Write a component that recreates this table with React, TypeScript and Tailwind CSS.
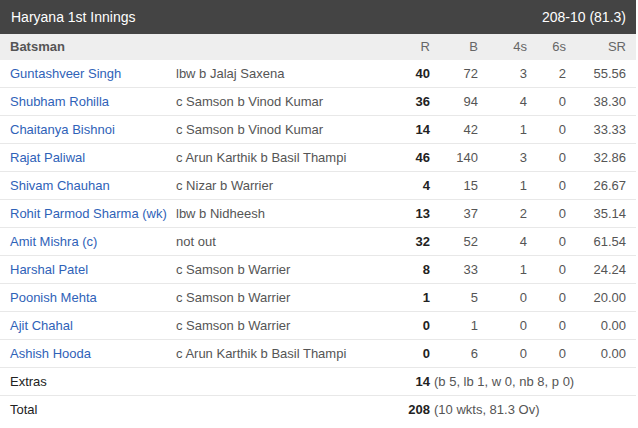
const batsmen = [
  { name: 'Guntashveer Singh', out: 'lbw b Jalaj Saxena', r: 40, b: 72, f: 3, s: 2, sr: '55.56' },
  { name: 'Shubham Rohilla', out: 'c Samson b Vinod Kumar', r: 36, b: 94, f: 4, s: 0, sr: '38.30' },
  { name: 'Chaitanya Bishnoi', out: 'c Samson b Vinod Kumar', r: 14, b: 42, f: 1, s: 0, sr: '33.33' },
  { name: 'Rajat Paliwal', out: 'c Arun Karthik b Basil Thampi', r: 46, b: 140, f: 3, s: 0, sr: '32.86' },
  { name: 'Shivam Chauhan', out: 'c Nizar b Warrier', r: 4, b: 15, f: 1, s: 0, sr: '26.67' },
  { name: 'Rohit Parmod Sharma (wk)', out: 'lbw b Nidheesh', r: 13, b: 37, f: 2, s: 0, sr: '35.14' },
  { name: 'Amit Mishra (c)', out: 'not out', r: 32, b: 52, f: 4, s: 0, sr: '61.54' },
  { name: 'Harshal Patel', out: 'c Samson b Warrier', r: 8, b: 33, f: 1, s: 0, sr: '24.24' },
  { name: 'Poonish Mehta', out: 'c Samson b Warrier', r: 1, b: 5, f: 0, s: 0, sr: '20.00' },
  { name: 'Ajit Chahal', out: 'c Samson b Warrier', r: 0, b: 1, f: 0, s: 0, sr: '0.00' },
  { name: 'Ashish Hooda', out: 'c Arun Karthik b Basil Thampi', r: 0, b: 6, f: 0, s: 0, sr: '0.00' },
];

const cols = 'grid grid-cols-[176px_214px_40px_48px_49px_39px_60px] pr-[10px]';

export default function App() {
  return (
    <div className="w-[636px] bg-white text-[13px] font-['Liberation_Sans',Arial,sans-serif]">
      <div className="h-[34px] bg-[#444444] flex items-center justify-between pl-[11px] pr-[10px] text-white text-[14px]">
        <span>Haryana 1st Innings</span>
        <span>208-10 (81.3)</span>
      </div>

      <div className={`${cols} h-[26px] items-center bg-[#eeeeee] text-[#555] font-bold`}>
        <span className="pl-[10px]">Batsman</span>
        <span />
        <span className="text-right font-normal text-[#666]">R</span>
        <span className="text-right font-normal text-[#666]">B</span>
        <span className="text-right font-normal text-[#666]">4s</span>
        <span className="text-right font-normal text-[#666]">6s</span>
        <span className="text-right font-normal text-[#666]">SR</span>
      </div>

      {batsmen.map((p) => (
        <div key={p.name} className={`${cols} h-[28px] items-center border-b border-[#e8e8e8] text-[#555]`}>
          <span className="pl-[10px] text-[#2f62b8] whitespace-nowrap">{p.name}</span>
          <span className="whitespace-nowrap">{p.out}</span>
          <span className="text-right font-bold text-[#222]">{p.r}</span>
          <span className="text-right">{p.b}</span>
          <span className="text-right">{p.f}</span>
          <span className="text-right">{p.s}</span>
          <span className="text-right">{p.sr}</span>
        </div>
      ))}

      <div className={`${cols} h-[28px] items-center border-b border-[#e8e8e8] text-[#555]`}>
        <span className="pl-[10px] text-[#222]">Extras</span>
        <span />
        <span className="text-right font-bold text-[#222]">14</span>
        <span className="col-span-4 whitespace-nowrap pl-[4px]">(b 5, lb 1, w 0, nb 8, p 0)</span>
      </div>

      <div className={`${cols} h-[28px] items-center text-[#555]`}>
        <span className="pl-[10px] text-[#222]">Total</span>
        <span />
        <span className="text-right font-bold text-[#222]">208</span>
        <span className="col-span-4 whitespace-nowrap pl-[4px]">(10 wkts, 81.3 Ov)</span>
      </div>
    </div>
  );
}
